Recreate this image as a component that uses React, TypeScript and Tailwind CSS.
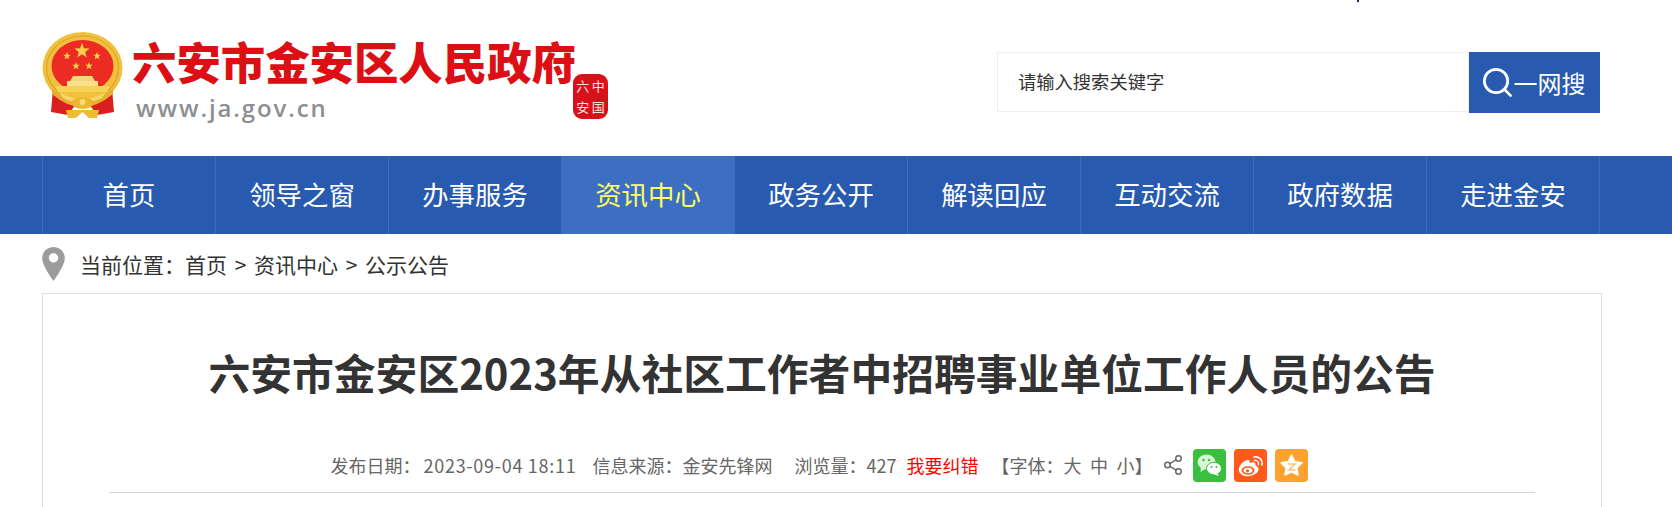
import { Search, Share2 } from "lucide-react";

const navItems = ["首页", "领导之窗", "办事服务", "资讯中心", "政务公开", "解读回应", "互动交流", "政府数据", "走进金安"];

function Star({ x, y, r }: { x: number; y: number; r: number }) {
  const points = Array.from({ length: 10 }, (_, i) => {
    const a = (Math.PI / 5) * i - Math.PI / 2;
    const d = i % 2 === 0 ? r : r * 0.42;
    return `${(x + d * Math.cos(a)).toFixed(2)},${(y + d * Math.sin(a)).toFixed(2)}`;
  }).join(" ");
  return <polygon points={points} fill="#f7d14d" />;
}

function Emblem() {
  return (
    <svg viewBox="0 0 81 86" className="w-[81px] h-[86px] shrink-0">
      <path d="M11 56 L9 80 L26 83 L34 72 Z" fill="#d9201e" />
      <path d="M70 56 L72 80 L55 83 L47 72 Z" fill="#d9201e" />
      <ellipse cx="40.5" cy="36" rx="40" ry="36" fill="#f1c13e" />
      <ellipse cx="40.5" cy="36" rx="36" ry="32" fill="none" stroke="#dca42a" strokeWidth="1.2" />
      <ellipse cx="40.5" cy="34" rx="31" ry="26" fill="#ec2c22" />
      <Star x={40} y={19} r={8} />
      <Star x={25} y={24} r={4} />
      <Star x={55} y={24} r={4} />
      <Star x={34} y={34} r={4} />
      <Star x={47} y={34} r={4} />
      <path d="M28 49 L31 44 H50 L53 49 Z" fill="#f5d67a" />
      <path d="M25 49 H56 V54 H25 Z" fill="#f8e08c" />
      <path d="M13 54 H68 L65 60 H16 Z" fill="#f6d257" />
      <path d="M10 56 Q40 82 71 56 L71 62 Q40 88 10 62 Z" fill="#e8ae2e" />
      <path d="M17 60 Q40 74 64 60 L60 66 Q40 76 21 66 Z" fill="#f7d767" />
      <ellipse cx="40.5" cy="71" rx="11" ry="6" fill="#eeb52f" />
      <circle cx="40.5" cy="70" r="3" fill="#f8dc76" />
      <path d="M24 78 H57 L55 86 H47 L40.5 80 L34 86 H26 Z" fill="#efbb35" />
    </svg>
  );
}

function Logo() {
  return (
    <div className="flex items-start ml-[42px] pt-[32px]">
      <Emblem />
      <div className="ml-[9px] flex flex-col -mt-[3px]">
        <div className="text-[44.4px] leading-[64px] font-black text-[#dc0f14] whitespace-nowrap">六安市金安区人民政府</div>
        <div className="ml-[4px] text-[24px] leading-[30px] font-semibold tracking-[1.9px] text-[#8c8f91] font-['Open_Sans','Noto_Sans',sans-serif]">www.ja.gov.cn</div>
      </div>
      <div className="ml-[-3px] mt-[42px] w-[35px] h-[45px] rounded-[9px] bg-[#d8101a] grid grid-cols-2 place-items-center px-[2px] py-[1px] text-[#fbe3e3] text-[13px] leading-[18px]">
        <span>六</span>
        <span>中</span>
        <span>安</span>
        <span>国</span>
      </div>
    </div>
  );
}

function SearchBox() {
  return (
    <div className="flex ml-auto mr-[72px] mt-[52px] h-[61px]">
      <div className="w-[472px] h-[60px] border border-[#eeeeee] flex items-center pl-[20px] text-[18.3px] text-[#333333]">请输入搜索关键字</div>
      <div className="w-[131px] bg-[#285bb0] text-white flex items-center justify-center pr-[4px] text-[24px]">
        <Search className="w-[35px] h-[35px] -mr-[1px]" strokeWidth={1.9} />
        <span>一网搜</span>
      </div>
    </div>
  );
}

function Nav() {
  return (
    <nav className="bg-[#285bb0] h-[78px]">
      <div className="ml-[42px] w-[1558px] h-full grid grid-cols-9 border-l border-[#3d6cb9]">
        {navItems.map((item, i) => (
          <div
            key={item}
            className={
              i === 3
                ? "flex items-center justify-center pb-[2px] -ml-[1px] text-[26.4px] bg-[#3c6fc1] text-[#ffff66]"
                : "flex items-center justify-center pb-[2px] text-[26.4px] text-white border-r border-[#3d6cb9]"
            }
          >
            {item}
          </div>
        ))}
      </div>
    </nav>
  );
}

function Breadcrumb() {
  return (
    <div className="ml-[42px] h-[59px] flex items-center">
      <svg viewBox="0 0 24 36" className="w-[23px] h-[34px] fill-[#9c9c9c] shrink-0">
        <path fillRule="evenodd" d="M12 0C5.4 0 0 5.3 0 12c0 8 12 24 12 24s12-16 12-24C24 5.3 18.6 0 12 0Zm0 16.5a5 5 0 1 1 0-10 5 5 0 0 1 0 10Z" />
      </svg>
      <span className="ml-[15px] pt-[2px] text-[21px] text-[#333333] whitespace-pre [word-spacing:3px]">当前位置：首页 &gt; 资讯中心 &gt; 公示公告</span>
    </div>
  );
}

function WechatIcon() {
  return (
    <svg viewBox="0 0 33 33" className="w-[33px] h-[33px]">
      <rect width="33" height="33" rx="4" fill="#39c03f" />
      <ellipse cx="13.5" cy="13" rx="9" ry="7.5" fill="#d8f5d4" />
      <path d="M8 18 L7.5 23 L12 20 Z" fill="#d8f5d4" />
      <ellipse cx="21" cy="19.5" rx="7.5" ry="6.2" fill="#ffffff" stroke="#39c03f" strokeWidth="1" />
      <path d="M24 24 L26 27 L20 25 Z" fill="#ffffff" />
      <circle cx="10.5" cy="11" r="1.2" fill="#39c03f" />
      <circle cx="16" cy="11" r="1.2" fill="#39c03f" />
      <circle cx="18.5" cy="18" r="1" fill="#39c03f" />
      <circle cx="23.5" cy="18" r="1" fill="#39c03f" />
    </svg>
  );
}

function WeiboIcon() {
  return (
    <svg viewBox="0 0 33 33" className="w-[33px] h-[33px]">
      <rect width="33" height="33" rx="4" fill="#ff5a1a" />
      <path d="M13 11 C7 13 4 19 5 22 C6 26 11 28 16 27 C21 26 25 23 24.5 19.5 C24 17 21.5 17 21.5 16 C22 13 19 12.5 15.5 14 C16 11 15 10.5 13 11 Z" fill="#ffffff" />
      <ellipse cx="14" cy="21.5" rx="6.5" ry="4.2" fill="#ff5a1a" />
      <ellipse cx="14" cy="21.5" rx="4.5" ry="2.8" fill="#ffffff" />
      <circle cx="13.5" cy="21.8" r="1.6" fill="#ff5a1a" />
      <path d="M20 8 C25 7 29 11 28 16" fill="none" stroke="#ffffff" strokeWidth="1.6" strokeLinecap="round" />
      <path d="M20.5 11.5 C23 11 25 13 24.5 15.5" fill="none" stroke="#ffffff" strokeWidth="1.4" strokeLinecap="round" />
    </svg>
  );
}

function QzoneIcon() {
  return (
    <svg viewBox="0 0 33 33" className="w-[33px] h-[33px]">
      <rect width="33" height="33" rx="4" fill="#ffa12f" />
      <path d="M16.5 6 L19.8 12.8 L27 13.8 L21.8 19 L23 26 L16.5 22.8 L10 26 L11.2 19 L6 13.8 L13.2 12.8 Z" fill="#ffffff" stroke="#ffffff" strokeWidth="1.5" strokeLinejoin="round" />
      <path d="M13 15 H20 L14 21 H20.5" fill="none" stroke="#ffc27a" strokeWidth="1.6" />
    </svg>
  );
}

function Meta() {
  return (
    <div className="mt-[17px] flex items-center justify-center h-[49px] border-b border-[#d2d2d2] pb-[6px] pr-[6px] text-[18px] text-[#666666] whitespace-nowrap">
      <span>
        发布日期：<span className="ml-[3px] tracking-[0.72px]">2023-09-04 18:11</span>
      </span>
      <span className="ml-[16px]">信息来源：金安先锋网</span>
      <span className="ml-[22px]">浏览量：427</span>
      <span className="ml-[10px] text-[#ff0000]">我要纠错</span>
      <span className="ml-[13px] whitespace-pre [word-spacing:4.5px]">【字体：大 中 小】</span>
      <Share2 className="ml-[9px] w-[22px] h-[22px] text-[#666666]" strokeWidth={1.6} />
      <div className="ml-[9px] flex gap-[8px]">
        <WechatIcon />
        <WeiboIcon />
        <QzoneIcon />
      </div>
    </div>
  );
}

export default function App() {
  return (
    <div className="relative h-[507px] overflow-hidden bg-white font-['Noto_Sans_CJK_SC','Liberation_Sans',sans-serif]">
      <span className="absolute top-0 left-[1357px] w-[2px] h-[2px] bg-[#1b2a5a]" />
      <header className="h-[156px] flex">
        <Logo />
        <SearchBox />
      </header>
      <Nav />
      <Breadcrumb />
      <main className="ml-[42px] w-[1560px] border-[1.5px] border-[#dddddd] px-[66px] pt-[23px]">
        <h1 className="text-[41.8px] leading-[110px] font-bold text-[#333333] text-center whitespace-nowrap">
          六安市金安区2023年从社区工作者中招聘事业单位工作人员的公告
        </h1>
        <Meta />
        <div className="h-[40px]" />
      </main>
    </div>
  );
}
